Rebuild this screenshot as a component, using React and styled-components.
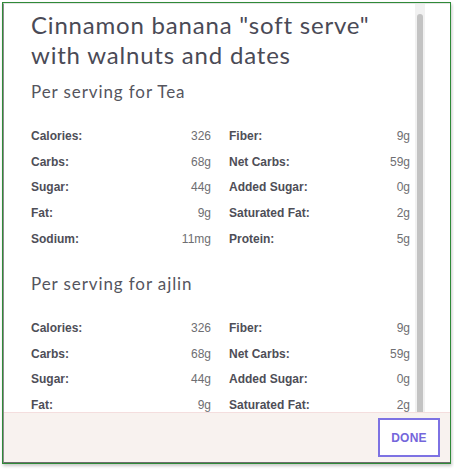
import React from "react";
import styled, { createGlobalStyle } from "styled-components";

const Global = createGlobalStyle`
  html, body { margin: 0; padding: 0; background: #ffffff; }
  #root { width: 454px; height: 469px; }
`;

const Page = styled.div`
  width: 454px;
  height: 469px;
  padding: 2px 0 0 2px;
  box-sizing: border-box;
`;

const Frame = styled.div`
  width: 449px;
  height: 462px;
  box-sizing: border-box;
  border: 1px solid #2f8a38;
  box-shadow: 1px 2px 3px rgba(0, 0, 0, 0.22);
  display: flex;
  flex-direction: column;
  background: #fff;
`;

const Dialog = styled.div`
  flex: 1;
  display: flex;
  flex-direction: column;
  border-left: 1px solid #8c8c8c;
  border-top: 1px solid #e4e4e4;
  border-bottom: 1px solid #6f6f6f;
  min-height: 0;
`;

const BodyRow = styled.div`
  flex: 1;
  display: flex;
  min-height: 0;
  padding-right: 25px;
`;

const Scroll = styled.div`
  flex: 1;
  overflow: hidden;
  padding: 6px 4px 0 27px;
`;

const Track = styled.div`
  width: 10px;
  background: #f1f1f1;
  padding: 10px 2px 0 2px;
  box-sizing: border-box;
  display: flex;
`;

const Thumb = styled.div`
  flex: 1;
  background: #c3c3c3;
  border-radius: 3px 3px 0 0;
`;

const Title = styled.h1`
  margin: 0;
  font-family: Lato, "Open Sans", sans-serif;
  font-weight: 400;
  font-size: 24px;
  line-height: 30px;
  color: #4a4a56;
  letter-spacing: 0.8px;
`;

const Section = styled.section`
  margin-top: ${(p) => p.$top}px;
`;

const Heading = styled.h2`
  margin: 0;
  font-family: Lato, "Open Sans", sans-serif;
  font-weight: 400;
  font-size: 17px;
  line-height: 24px;
  color: #55555e;
  letter-spacing: 0.9px;
`;

const Grid = styled.div`
  margin-top: 19px;
  display: grid;
  grid-template-columns: 180px 181px;
  column-gap: 18px;
  grid-auto-rows: 25.8px;
`;

const Cell = styled.div`
  display: flex;
  justify-content: space-between;
  align-items: center;
  font-family: "Liberation Sans", Arial, sans-serif;
  font-size: 12px;
`;

const Label = styled.span`
  font-weight: 700;
  color: #4e4e57;
`;

const Value = styled.span`
  color: #6e6e72;
`;

const Footer = styled.div`
  height: 50px;
  background: #f8f2ef;
  border-top: 1px solid #f4dede;
  display: flex;
  justify-content: flex-end;
  align-items: flex-start;
  padding: 5px 10px 0 0;
  box-sizing: border-box;
`;

const DoneButton = styled.button`
  width: 62px;
  height: 39px;
  box-sizing: border-box;
  border: 2px solid #7d72e3;
  background: #ffffff;
  color: #7466db;
  font-family: "Liberation Sans", Arial, sans-serif;
  font-weight: 700;
  font-size: 12px;
  letter-spacing: 0.2px;
  padding: 0;
  cursor: pointer;
`;

const rows = [
  ["Calories:", "326", "Fiber:", "9g"],
  ["Carbs:", "68g", "Net Carbs:", "59g"],
  ["Sugar:", "44g", "Added Sugar:", "0g"],
  ["Fat:", "9g", "Saturated Fat:", "2g"],
  ["Sodium:", "11mg", "Protein:", "5g"],
];

const Nutrition = () => (
  <Grid>
    {rows.map(([a, av, b, bv]) => (
      <React.Fragment key={a}>
        <Cell>
          <Label>{a}</Label>
          <Value>{av}</Value>
        </Cell>
        <Cell>
          <Label>{b}</Label>
          <Value>{bv}</Value>
        </Cell>
      </React.Fragment>
    ))}
  </Grid>
);

export default function App() {
  return (
    <>
      <Global />
      <Page>
        <Frame>
          <Dialog>
            <BodyRow>
              <Scroll>
                <Title>
                  Cinnamon banana "soft serve"
                  <br />
                  with walnuts and dates
                </Title>
                <Section $top={10}>
                  <Heading>Per serving for Tea</Heading>
                  <Nutrition />
                </Section>
                <Section $top={20}>
                  <Heading>Per serving for ajlin</Heading>
                  <Nutrition />
                </Section>
              </Scroll>
              <Track>
                <Thumb />
              </Track>
            </BodyRow>
            <Footer>
              <DoneButton>DONE</DoneButton>
            </Footer>
          </Dialog>
        </Frame>
      </Page>
    </>
  );
}
